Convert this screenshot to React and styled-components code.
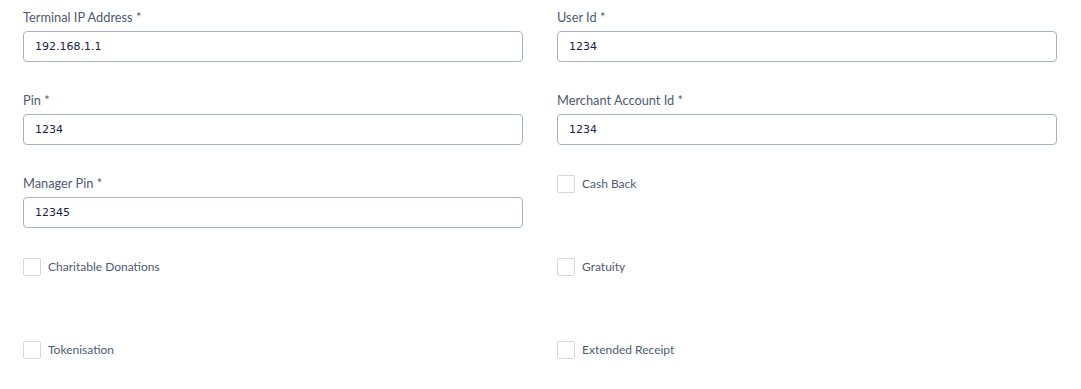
import React from "react";
import styled, { createGlobalStyle } from "styled-components";

const COLORS = {
  label: "#4f5a70",
  text: "#1c2148",
  border: "#a7b3c4",
  boxBorder: "#d3d8e0",
};

const FIELDS = [
  { type: "input", label: "Terminal IP Address *", value: "192.168.1.1" },
  { type: "input", label: "User Id *", value: "1234" },
  { type: "input", label: "Pin *", value: "1234" },
  { type: "input", label: "Merchant Account Id *", value: "1234" },
  { type: "input", label: "Manager Pin *", value: "12345" },
  { type: "check", label: "Cash Back" },
  { type: "check", label: "Charitable Donations" },
  { type: "check", label: "Gratuity" },
  { type: "check", label: "Tokenisation" },
  { type: "check", label: "Extended Receipt" },
];

const GlobalStyle = createGlobalStyle`
  body {
    margin: 0;
    background: #ffffff;
    font-family: "Lato", "Open Sans", sans-serif;
  }
`;

const App = () => {
  return (
    <>
      <GlobalStyle />
      <Form>
        {FIELDS.map((field) =>
          field.type === "input" ? (
            <Field key={field.label}>
              <Label>{field.label}</Label>
              <TextInput defaultValue={field.value} />
            </Field>
          ) : (
            <CheckField key={field.label}>
              <CheckRow>
                <Box type="checkbox" />
                <CheckLabel>{field.label}</CheckLabel>
              </CheckRow>
            </CheckField>
          )
        )}
      </Form>
    </>
  );
};

const Form = styled.form`
  display: grid;
  grid-template-columns: 500px 500px;
  grid-template-rows: repeat(4, 62px) auto;
  row-gap: 21px;
  column-gap: 34px;
  padding: 0 24px 0 23px;
`;

const Field = styled.div`
  display: flex;
  flex-direction: column;
  padding-top: 9px;
`;

const CheckField = styled.div`
  padding-top: 9px;
`;

const Label = styled.label`
  font-size: 12.8px;
  line-height: 16px;
  color: ${COLORS.label};
  margin-bottom: 6px;
`;

const TextInput = styled.input`
  box-sizing: border-box;
  width: 100%;
  height: 31px;
  padding: 0 11px;
  border: 1px solid ${COLORS.border};
  border-radius: 4px;
  font-family: "DejaVu Sans", sans-serif;
  font-size: 11px;
  color: ${COLORS.text};
  outline: none;
`;

const CheckRow = styled.label`
  display: flex;
  align-items: center;
  gap: 7px;
  height: 18px;
`;

const Box = styled.input`
  appearance: none;
  flex: none;
  margin: 0;
  width: 18px;
  height: 18px;
  border: 1px solid ${COLORS.boxBorder};
  border-radius: 2px;
  background: #fff;
`;

const CheckLabel = styled.span`
  font-size: 12px;
  line-height: 18px;
  color: ${COLORS.label};
`;

export default App;
